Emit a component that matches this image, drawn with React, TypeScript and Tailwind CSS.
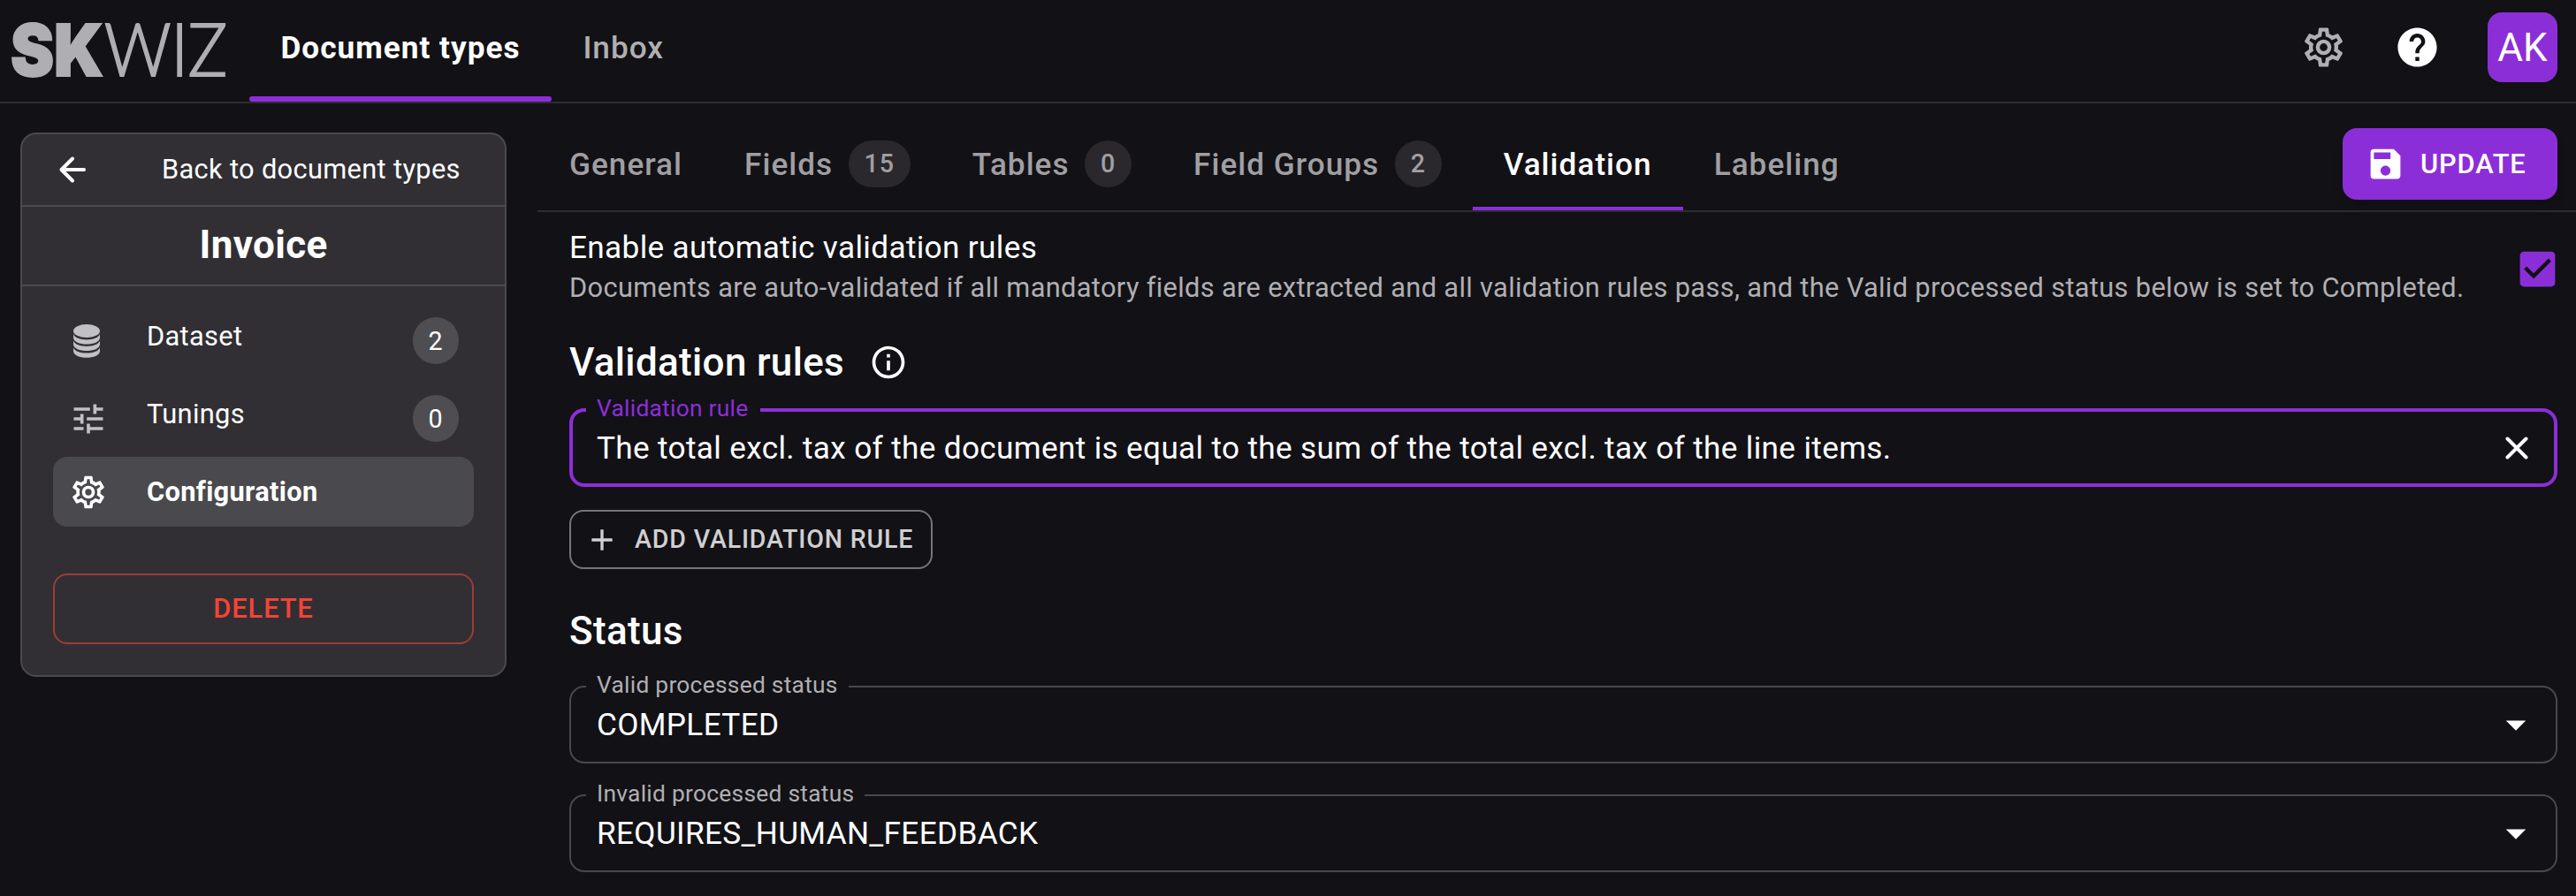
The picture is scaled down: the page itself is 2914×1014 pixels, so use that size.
import type { ReactNode } from 'react';
import {
  MdAdd,
  MdArrowDropDown,
  MdCheckBox,
  MdHelp,
  MdOutlineInfo,
  MdSave,
  MdTune,
} from 'react-icons/md';

const MAIN_TABS = [
  { label: 'Document types', active: true },
  { label: 'Inbox', active: false },
];

const CONFIG_TABS = [
  { label: 'General' },
  { label: 'Fields', count: 15 },
  { label: 'Tables', count: 0 },
  { label: 'Field Groups', count: 2 },
  { label: 'Validation', active: true },
  { label: 'Labeling' },
];

function Logo() {
  return (
    <svg
      width="264"
      height="115"
      viewBox="0 0 264 115"
      className="shrink-0 overflow-visible fill-[#afaeb1] stroke-[#afaeb1]"
      aria-label="SKWIZ"
    >
      <text x="12" y="85.5" fontFamily="Inter" fontWeight="900" fontSize="81" strokeWidth="2" textLength="105" lengthAdjust="spacingAndGlyphs">
        SK
      </text>
      <text x="118" y="85.5" fontFamily="Lato" fontWeight="300" fontSize="82" strokeWidth="2" textLength="139" lengthAdjust="spacingAndGlyphs">
        WIZ
      </text>
    </svg>
  );
}

function CogIcon({ className }: { className: string }) {
  return (
    <svg viewBox="0 0 24 24" fill="currentColor" className={className}>
      <path d="M12,8A4,4 0 0,1 16,12A4,4 0 0,1 12,16A4,4 0 0,1 8,12A4,4 0 0,1 12,8M12,10A2,2 0 0,0 10,12A2,2 0 0,0 12,14A2,2 0 0,0 14,12A2,2 0 0,0 12,10M10,22C9.75,22 9.54,21.82 9.5,21.58L9.13,18.93C8.5,18.68 7.96,18.34 7.44,17.94L4.95,18.95C4.73,19.03 4.46,18.95 4.34,18.73L2.34,15.27C2.21,15.05 2.27,14.78 2.46,14.63L4.57,12.97L4.5,12L4.57,11L2.46,9.37C2.27,9.22 2.21,8.95 2.34,8.73L4.34,5.27C4.46,5.05 4.73,4.96 4.95,5.05L7.44,6.05C7.96,5.66 8.5,5.32 9.13,5.07L9.5,2.42C9.54,2.18 9.75,2 10,2H14C14.25,2 14.46,2.18 14.5,2.42L14.87,5.07C15.5,5.32 16.04,5.66 16.56,6.05L19.05,5.05C19.27,4.96 19.54,5.05 19.66,5.27L21.66,8.73C21.79,8.95 21.73,9.22 21.54,9.37L19.43,11L19.5,12L19.43,13L21.54,14.63C21.73,14.78 21.79,15.05 21.66,15.27L19.66,18.73C19.54,18.95 19.27,19.04 19.05,18.95L16.56,17.95C16.04,18.34 15.5,18.68 14.87,18.93L14.5,21.58C14.46,21.82 14.25,22 14,22H10M11.25,4L10.88,6.61C9.68,6.86 8.62,7.5 7.85,8.39L5.44,7.35L4.69,8.65L6.8,10.2C6.4,11.37 6.4,12.64 6.8,13.8L4.68,15.36L5.43,16.66L7.86,15.62C8.63,16.5 9.68,17.14 10.87,17.38L11.24,20H12.76L13.13,17.39C14.32,17.14 15.37,16.5 16.14,15.62L18.57,16.66L19.32,15.36L17.2,13.81C17.6,12.64 17.6,11.37 17.2,10.2L19.31,8.65L18.56,7.35L16.15,8.39C15.38,7.5 14.32,6.86 13.12,6.62L12.75,4H11.25Z" />
    </svg>
  );
}

function DatabaseIcon() {
  return (
    <svg width="30" height="38" viewBox="0 0 30 38" fill="currentColor">
      <ellipse cx="15" cy="7.5" rx="15" ry="7.5" />
      <path d="M0 11c2.5 8.5 27.5 8.5 30 0v4c0 10-30 10-30 0z" />
      <path d="M0 18.6c2.5 8.5 27.5 8.5 30 0v4c0 10-30 10-30 0z" />
      <path d="M0 26.2c2.5 8.5 27.5 8.5 30 0v4c0 10-30 10-30 0z" />
    </svg>
  );
}

function Badge({ children, className }: { children: ReactNode; className: string }) {
  return (
    <span className={`flex h-[53px] items-center rounded-full px-[18px] text-[28.6px] ${className}`}>
      {children}
    </span>
  );
}

function Header() {
  return (
    <header className="flex h-[117px] items-start border-b-2 border-[#2d2c31]">
      <Logo />
      <nav className="ml-[18px] flex h-[115px]">
        {MAIN_TABS.map((tab) => (
          <a
            key={tab.label}
            className={
              tab.active
                ? 'flex flex-col justify-between whitespace-nowrap font-bold text-white'
                : 'flex flex-col justify-between whitespace-nowrap font-medium text-[#b0afb2]'
            }
          >
            <span className="px-[35.4px] pt-[33px] text-[35.2px] leading-[42px] tracking-[0.02857em]">{tab.label}</span>
            {tab.active && <span className="h-1.5 rounded-[3px] bg-[#8c2ed8]" />}
          </a>
        ))}
      </nav>
      <div className="ml-auto flex h-[107px] items-center pr-[21px]">
        <CogIcon className="size-[53px] text-[#b0afb2]" />
        <MdHelp className="ml-[53px] size-[53px] text-white" />
        <div className="ml-[53px] flex size-[79px] items-center justify-center rounded-2xl bg-[#8c2ed8] text-[44px] leading-none">
          AK
        </div>
      </div>
    </header>
  );
}

function Sidebar() {
  return (
    <aside className="ml-[23px] mt-[33px] h-[616px] w-[550px] shrink-0 rounded-[18px] border-2 border-[#4a494e] bg-[#312f34]">
      <div className="flex h-[82px] items-center border-b-2 border-[#4a494e] pl-[41px]">
        <svg width="32" height="32" viewBox="0 0 32 32" fill="none" stroke="currentColor" strokeWidth="4" strokeLinecap="round" strokeLinejoin="round">
          <path d="M16 3.5 3.5 16 16 28.5M4 16h25" />
        </svg>
        <span className="ml-[85px] whitespace-nowrap text-[30.8px] leading-10 tracking-[0.01071em]">
          Back to document types
        </span>
      </div>
      <div className="flex h-[90px] items-center justify-center border-b-2 border-[#4a494e] pb-[3px] text-[44px] font-bold tracking-[0.0075em]">
        Invoice
      </div>
      <nav className="mx-[35px] mt-[17px] flex flex-col gap-[9px] text-[30.8px] leading-10 tracking-[0.01071em]">
        <a className="flex h-[79px] items-center pl-[23px] pr-[17px]">
          <span className="mt-2.5 w-[83px] text-[#c1c0c2]">
            <DatabaseIcon />
          </span>
          <span>Dataset</span>
          <Badge className="ml-auto mt-2.5 bg-[#4e4d51]">2</Badge>
        </a>
        <a className="flex h-[79px] items-center pl-[18px] pr-[17px]">
          <span className="mt-2.5 w-[88px] text-[#c1c0c2]">
            <MdTune className="size-[44px]" />
          </span>
          <span>Tunings</span>
          <Badge className="ml-auto mt-2.5 bg-[#4e4d51]">0</Badge>
        </a>
        <a className="flex h-[79px] items-center rounded-2xl bg-[#4a494d] pl-[18px] font-bold">
          <span className="w-[88px]">
            <CogIcon className="size-[44px]" />
          </span>
          <span>Configuration</span>
        </a>
      </nav>
      <button className="mx-[35px] mt-[53px] flex h-20 w-[476px] items-center justify-center rounded-2xl border-2 border-[#9f3c38] text-[30.8px] font-medium tracking-[0.02857em] text-[#f44336]">
        DELETE
      </button>
    </aside>
  );
}

function TabBar() {
  return (
    <div className="flex h-[123px] items-start border-b-2 border-[#2d2c31] pr-[21px]">
      <div className="flex h-[121px] pl-px text-[35.2px] font-medium text-[#a09fa2]">
        {CONFIG_TABS.map((tab) => (
          <a
            key={tab.label}
            className={
              tab.active
                ? 'flex items-center border-b-4 border-[#8c2ed8] px-[35px] pt-[21px] text-white'
                : 'flex items-center border-b-4 border-transparent px-[35px] pt-[21px]'
            }
          >
            <span className="whitespace-nowrap leading-[42px] tracking-[0.02857em]">{tab.label}</span>
            {tab.count !== undefined && (
              <Badge className="mb-px ml-[17.4px] bg-[#2a282d] tracking-[0.02857em]">{tab.count}</Badge>
            )}
          </a>
        ))}
      </div>
      <button className="ml-auto mt-7 flex h-[81px] w-[243px] items-center rounded-2xl bg-[#8c2ed8] pl-[26px] text-[30.8px] font-medium tracking-[0.02857em] shadow-lg">
        <MdSave className="size-[45px]" />
        <span className="ml-[17px] pt-0.5">UPDATE</span>
      </button>
    </div>
  );
}

function StatusField({ label, value }: { label: string; value: string }) {
  return (
    <fieldset className="h-[102px] rounded-[17px] border-2 border-[#49484d] pl-[17px]">
      <legend className="px-3 pb-1 text-[26.4px] leading-[26px] tracking-[0.00938em] text-[#b0afb2]">{label}</legend>
      <div className="flex h-[56px] items-center justify-between pl-3 pr-[18px]">
        <span className="text-[35.2px] leading-[42px] tracking-[0.00938em]">{value}</span>
        <MdArrowDropDown className="size-[54px]" />
      </div>
    </fieldset>
  );
}

function ValidationPanel() {
  return (
    <div className="pl-9 pr-[21px]">
      <div className="mt-[19px] flex h-[91px] items-center justify-between">
        <div className="pt-0.5">
          <h3 className="text-[35.2px] leading-[40px] tracking-[0.00938em]">Enable automatic validation rules</h3>
          <p className="mt-px whitespace-nowrap text-[30.8px] leading-[50px] tracking-[0.01071em] text-[#b0afb2]">
            Documents are auto-validated if all mandatory fields are extracted and all validation rules pass, and the
            Valid processed status below is set to Completed.
          </p>
        </div>
        <MdCheckBox className="-mr-1 size-[53px] text-[#8c2ed8]" />
      </div>

      <div className="mt-[33px] flex h-[54px] items-center">
        <h2 className="text-[44px] font-medium leading-[54px] tracking-[0.0075em]">Validation rules</h2>
        <MdOutlineInfo className="ml-[28px] size-[44px]" />
      </div>

      <fieldset className="mt-[12px] h-[102px] rounded-[17px] border-4 border-[#8c2ed8] pl-[15px]">
        <legend className="pb-1 pl-3 pr-3.5 text-[26.4px] leading-[26px] tracking-[0.00938em] text-[#8c2ed8]">
          Validation rule
        </legend>
        <div className="flex h-[56px] items-center justify-between pl-3 pr-[28px]">
          <span className="text-[35.2px] leading-[42px] tracking-[0.00938em]">
            The total excl. tax of the document is equal to the sum of the total excl. tax of the line items.
          </span>
          <svg width="28" height="28" viewBox="0 0 28 28" fill="none" stroke="currentColor" strokeWidth="4" strokeLinecap="round">
            <path d="M3.5 3.5l21 21M24.5 3.5l-21 21" />
          </svg>
        </div>
      </fieldset>

      <button className="mt-[26px] flex h-[67px] w-[411px] items-center rounded-2xl border-2 border-[#76757a] pl-[15px] text-[28.6px] font-medium tracking-[0.02857em] text-[#d0cfd1]">
        <MdAdd className="size-[40px]" />
        <span className="ml-[17px] whitespace-nowrap">ADD VALIDATION RULE</span>
      </button>

      <h2 className="mt-[43px] text-[44px] font-medium leading-[54px] tracking-[0.0075em]">Status</h2>
      <div className="mt-[21px] flex flex-col gap-[21px]">
        <StatusField label="Valid processed status" value="COMPLETED" />
        <StatusField label="Invalid processed status" value="REQUIRES_HUMAN_FEEDBACK" />
      </div>
    </div>
  );
}

export default function App() {
  return (
    <div className="h-[1014px] w-[2914px] overflow-hidden bg-[#121116] font-['Roboto',sans-serif] text-white">
      <Header />
      <div className="flex">
        <Sidebar />
        <main className="ml-[35px] min-w-0 flex-1">
          <TabBar />
          <ValidationPanel />
        </main>
      </div>
    </div>
  );
}
